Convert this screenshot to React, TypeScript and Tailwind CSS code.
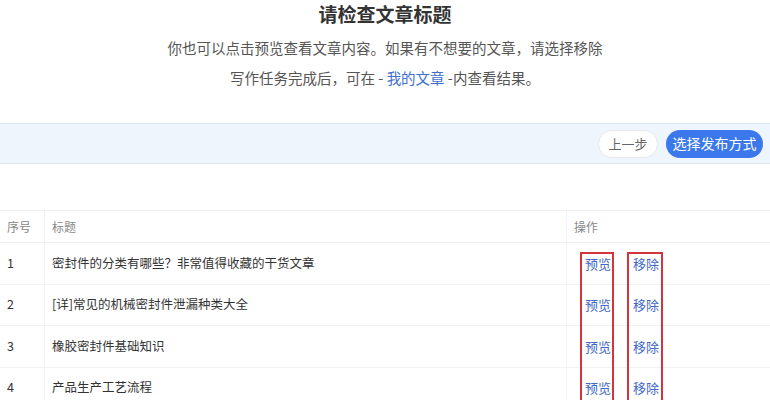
import React from "react";

const rows = [
  { no: "1", title: "密封件的分类有哪些？非常值得收藏的干货文章" },
  { no: "2", title: "[详]常见的机械密封件泄漏种类大全" },
  { no: "3", title: "橡胶密封件基础知识" },
  { no: "4", title: "产品生产工艺流程" },
];

export default function App() {
  return (
    <div
      className="w-[770px] h-[400px] overflow-hidden bg-white text-[#333]"
      style={{ fontFamily: '"Noto Sans CJK SC", "Noto Sans", "Liberation Sans", sans-serif' }}
    >
      <h1 className="text-center text-[19px] font-bold leading-[28px] text-[#333]">请检查文章标题</h1>
      <div className="mt-[5px] text-center text-[14.5px] leading-[30px] text-[#555]">
        <p>你也可以点击预览查看文章内容。如果有不想要的文章，请选择移除</p>
        <p>
          写作任务完成后，可在 - <span className="text-[#3f6fd0]">我的文章</span> -内查看结果。
        </p>
      </div>

      <div className="mt-[30px] flex h-[41px] items-center justify-end gap-[8px] border-y border-[#dde7f2] bg-[#eff5fd] pr-[7px]">
        <button className="flex h-[28px] w-[60px] items-center justify-center rounded-full border border-[#e4e9ef] bg-white text-[13px] text-[#666]">
          上一步
        </button>
        <button className="flex h-[28px] w-[97px] items-center justify-center rounded-full bg-[#3a78ec] text-[14px] text-white">
          选择发布方式
        </button>
      </div>

      <div className="relative mt-[46px]">
        <div className="grid h-[33px] grid-cols-[45px_522px_1fr] border-t border-b border-[#f0f0f0] text-[12px] text-[#888]">
          <div className="flex items-center border-r border-[#f2f2f2] pl-[7px]">序号</div>
          <div className="flex items-center border-r border-[#f2f2f2] pl-[7px]">标题</div>
          <div className="flex items-center pl-[7px]">操作</div>
        </div>
        {rows.map((r) => (
          <div
            key={r.no}
            className="grid h-[41.5px] grid-cols-[45px_522px_1fr] border-b border-[#f2f2f2] text-[12.5px] text-[#333]"
          >
            <div className="flex items-center border-r border-[#f4f4f4] pl-[7px]">{r.no}</div>
            <div className="flex items-center border-r border-[#f4f4f4] pl-[7px]">{r.title}</div>
            <div className="flex items-center gap-[22px] pl-[18px] text-[13px] text-[#4068c8]">
              <span>预览</span>
              <span>移除</span>
            </div>
          </div>
        ))}
        <div className="pointer-events-none absolute left-[580px] top-[42px] h-[200px] w-[34px] border-2 border-[#d6343c]" />
        <div className="pointer-events-none absolute left-[627px] top-[42px] h-[200px] w-[36px] border-2 border-[#d6343c]" />
      </div>
    </div>
  );
}
